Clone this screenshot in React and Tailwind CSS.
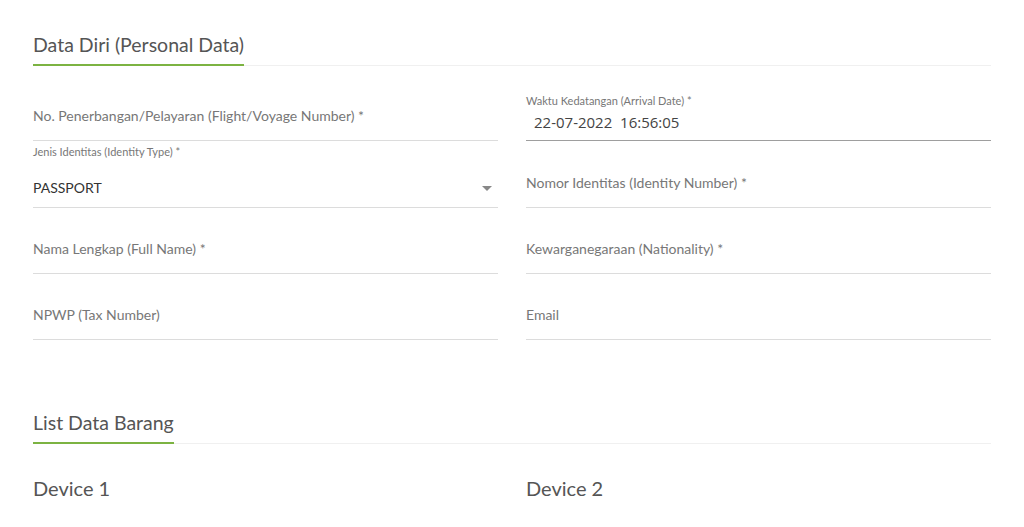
import React from "react";

const font = { fontFamily: "Lato, 'Noto Sans', sans-serif" };

function Heading({ children }) {
  return (
    <div className="border-b border-[#f0f0f0]">
      <div className="w-fit border-b-2 border-[#7cb342] mb-[-1px] pb-[5px] text-[19.5px] leading-[28px] text-[#555]">
        {children}
      </div>
    </div>
  );
}

function Field({ label, tall }) {
  return (
    <div className={(tall ? "h-[67px] " : "h-[66px] ") + "flex flex-col justify-end border-b border-[#dcdcdc]"}>
      <div className="pb-[14px] text-[14px] leading-[20px] text-[#777]">{label}</div>
    </div>
  );
}

export default function App() {
  return (
    <div className="bg-white w-[1024px] h-[527px] overflow-hidden px-[33px] pt-[31px]" style={font}>
      <Heading>Data Diri (Personal Data)</Heading>
      <div className="grid grid-cols-2 gap-x-[28px] mt-[9px]">
        <Field label="No. Penerbangan/Pelayaran (Flight/Voyage Number) *" />
        <div className="h-[66px] flex flex-col justify-end border-b border-[#9e9e9e]">
          <div className="text-[11px] leading-[14px] text-[#777]">Waktu Kedatangan (Arrival Date) *</div>
          <div
            className="mt-[4px] pb-[8px] pl-[8px] text-[15px] leading-[20px] text-[#444] whitespace-pre"
            style={{ fontFamily: "'Open Sans', sans-serif" }}
          >
            22-07-2022  16:56:05
          </div>
        </div>
        <div className="h-[67px] flex flex-col border-b border-[#dcdcdc]">
          <div className="mt-[4px] text-[11px] leading-[14px] text-[#777]">Jenis Identitas (Identity Type) *</div>
          <div className="mt-[19px] flex items-center justify-between pr-[6px]">
            <span className="text-[14px] leading-[20px] text-[#333]">PASSPORT</span>
            <svg width="10" height="5" viewBox="0 0 10 5">
              <path d="M0 0 L10 0 L5 5 Z" fill="#888" />
            </svg>
          </div>
        </div>
        <Field tall label="Nomor Identitas (Identity Number) *" />
        <Field label="Nama Lengkap (Full Name) *" />
        <Field label="Kewarganegaraan (Nationality) *" />
        <Field label="NPWP (Tax Number)" />
        <Field label="Email" />
      </div>
      <div className="mt-[69px]">
        <Heading>List Data Barang</Heading>
      </div>
      <div className="grid grid-cols-2 gap-x-[28px] mt-[30px]">
        <div className="text-[20px] leading-[28px] text-[#555]">Device 1</div>
        <div className="text-[20px] leading-[28px] text-[#555]">Device 2</div>
      </div>
    </div>
  );
}
